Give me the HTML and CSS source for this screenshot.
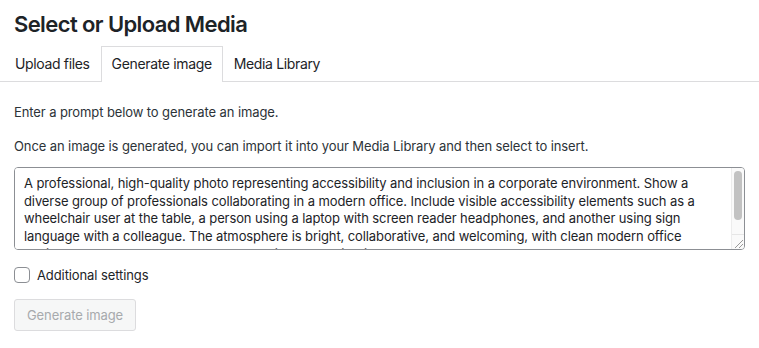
FILE: index.html
```html
<!DOCTYPE html>
<html lang="en">
<head>
    <meta charset="UTF-8">
    <meta name="viewport" content="width=device-width, initial-scale=1.0">
    <title>Select or Upload Media</title>
    <link rel="stylesheet" href="styles.css">
</head>
<body>

    <h1 class="title">Select or Upload Media</h1>

    <nav class="tabs">
        <a href="#" class="tab">Upload files</a>
        <a href="#" class="tab active">Generate image</a>
        <a href="#" class="tab">Media Library</a>
    </nav>

    <div class="panel">
        <p>Enter a prompt below to generate an image.</p>
        <p>Once an image is generated, you can import it into your Media Library and then select to insert.</p>

        <div class="prompt-box">
            <textarea class="prompt" rows="4">A professional, high-quality photo representing accessibility and inclusion in a corporate environment. Show a
diverse group of professionals collaborating in a modern office. Include visible accessibility elements such as a
wheelchair user at the table, a person using a laptop with screen reader headphones, and another using sign
language with a colleague. The atmosphere is bright, collaborative, and welcoming, with clean modern office
design. Neutral, corporate color palette with natural lighting.</textarea>
            <div class="scrollbar">
                <div class="thumb"></div>
                <div class="grip">
                    <svg width="12" height="14" viewBox="0 0 12 14">
                        <path d="M3 13 L11 5 M7 13 L11 9" stroke="#9a9a9a" stroke-width="1" fill="none"/>
                    </svg>
                </div>
            </div>
        </div>

        <label class="check">
            <input type="checkbox">
            <span>Additional settings</span>
        </label>

        <button class="button" disabled>Generate image</button>
    </div>

</body>
</html>
```

FILE: styles.css
```css
body {
    margin: 0;
    background: #fff;
    color: #1d2327;
    font-family: Inter, "Noto Sans", sans-serif;
    font-size: 13px;
}
.title {
    margin: 0;
    padding: 9px 14px 0;
    font-size: 22px;
    line-height: 30px;
    font-weight: 600;
    letter-spacing: -0.6px;
}
.tabs {
    display: flex;
    margin-top: 7px;
    padding-left: 4px;
    border-bottom: 1px solid #dcdcde;
}
.tab {
    display: block;
    padding: 0 10px;
    height: 34px;
    line-height: 34px;
    margin-bottom: -1px;
    border: 1px solid transparent;
    border-bottom: 0;
    color: #1d2327;
    text-decoration: none;
    font-size: 14px;
    letter-spacing: -0.35px;
}
.tab.active {
    border-color: #dcdcde;
    background: #fff;
    height: 35px;
}
.panel {
    padding: 0 14px;
}
.panel p {
    margin: 0;
    padding-top: 23px;
    line-height: 14px;
    color: #2c3338;
    letter-spacing: -0.1px;
}
.panel p + p {
    padding-top: 20px;
}
.prompt-box {
    display: flex;
    box-sizing: border-box;
    width: 731px;
    height: 83px;
    margin-top: 14px;
    border: 1px solid #8c8f94;
    border-radius: 4px;
    overflow: hidden;
}
.prompt {
    flex: 1;
    display: block;
    box-sizing: border-box;
    height: 100%;
    padding: 7px 0 4px 9px;
    border: 0;
    outline: none;
    font-family: Inter, "Noto Sans", sans-serif;
    font-size: 13px;
    line-height: 17.7px;
    letter-spacing: -0.1px;
    color: #1d2327;
    resize: none;
    overflow: hidden;
    white-space: pre-wrap;
}
.scrollbar {
    width: 12px;
    display: flex;
    flex-direction: column;
    justify-content: space-between;
    background: #fafafa;
    border-left: 1px solid #ededed;
}
.thumb {
    width: 8px;
    height: 49px;
    margin: 3px 0 0 2px;
    border-radius: 4px;
    background: #c2c2c2;
}
.grip {
    height: 14px;
    border-top: 1px solid #e6e6e6;
    line-height: 0;
}
.check {
    display: flex;
    align-items: center;
    gap: 7px;
    margin-top: 17px;
    color: #1d2327;
    letter-spacing: -0.1px;
}
.check input {
    appearance: none;
    width: 16px;
    height: 16px;
    margin: 0;
    border: 1px solid #8c8f94;
    border-radius: 4px;
    background: #fff;
}
.button {
    margin-top: 16px;
    height: 32px;
    padding: 0 12px;
    border: 1px solid #dcdcde;
    border-radius: 3px;
    background: #f6f7f7;
    color: #a7aaad;
    font-family: Inter, "Noto Sans", sans-serif;
    font-size: 13px;
    letter-spacing: -0.1px;
}
```
